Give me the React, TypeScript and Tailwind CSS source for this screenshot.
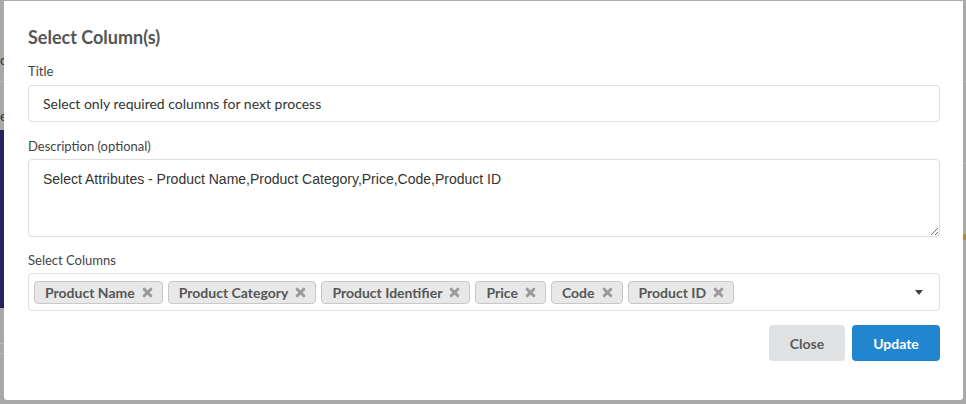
const tags = ['Product Name', 'Product Category', 'Product Identifier', 'Price', 'Code', 'Product ID'];

function Tag({ label }: { label: string }) {
  return (
    <div className="flex h-[23px] items-center rounded-[4px] border border-[#c8c8c8] bg-[#e8e8e8] pl-[10px] pr-[9px] text-[14px] font-bold text-[#575757]">
      <span>{label}</span>
      <svg width="11" height="11" viewBox="0 0 11 11" className="ml-[7px]">
        <path d="M2.2 2.2 L8.8 8.8 M8.8 2.2 L2.2 8.8" stroke="#9a9a9a" strokeWidth="3" strokeLinecap="round" />
      </svg>
    </div>
  );
}

export default function App() {
  return (
    <div
      className="flex h-[404px] w-[966px] overflow-hidden bg-[#a9a9a9]"
      style={{ fontFamily: 'Lato, "Noto Sans", sans-serif' }}
    >
      {/* page behind the overlay, left edge */}
      <div className="flex w-[4px] flex-col">
        <div className="h-[82px] border-b border-[#b8b8b8] pt-[52px] text-[14px] leading-[16px] text-[#333]">c</div>
        <div className="h-[48px] pt-[26px] text-[14px] leading-[16px] text-[#333]">e</div>
        <div className="h-[178px] bg-[#26245e]" />
        <div className="h-[36px] border-b border-[#b8b8b8]" />
        <div className="h-[10px] border-b border-[#b8b8b8]" />
      </div>

      <div className="mt-[1px] flex h-[399px] flex-1 flex-col rounded-b-[3px] bg-white pl-6 pr-[23px] pt-[25px]">
        <h2 className="h-[22px] text-[18px] font-bold leading-[22px] text-[#555]">Select Column(s)</h2>

        <label className="mt-[15px] block h-[17px] text-[13px] leading-[17px] text-[#444]">Title</label>
        <input
          className="mt-[5px] h-[37px] w-full rounded-[4px] border border-[#dedede] px-[14px] text-[14px] text-[#333] outline-none"
          defaultValue="Select only required columns for next process"
        />

        <label className="mt-[16px] block h-[17px] text-[13px] leading-[17px] text-[#444]">Description (optional)</label>
        <textarea
          className="mt-[4px] h-[78px] w-full resize-y rounded-[4px] border border-[#dedede] px-[14px] pt-[10px] text-[14px] leading-[18px] text-[#333] outline-none"
          style={{ fontFamily: '"Liberation Sans", Arial, sans-serif' }}
          defaultValue="Select Attributes - Product Name,Product Category,Price,Code,Product ID"
        />

        <label className="mt-[15px] block h-[17px] text-[13px] leading-[17px] text-[#444]">Select Columns</label>
        <div className="mt-[4px] flex h-[38px] items-center rounded-[4px] border border-[#dedede] pl-[5px] pr-[16px]">
          <div className="flex flex-1 gap-[5px]">
            {tags.map((t) => (
              <Tag key={t} label={t} />
            ))}
          </div>
          <svg width="8" height="5" viewBox="0 0 8 5">
            <path d="M0 0 L8 0 L4 5 Z" fill="#444" />
          </svg>
        </div>

        <div className="mt-[14px] flex justify-end gap-[7px]">
          <button className="h-[36px] w-[76px] rounded-[4px] bg-[#e0e1e2] text-[14px] font-bold text-[#5a5a5a]">Close</button>
          <button className="h-[36px] w-[88px] rounded-[4px] bg-[#2185d0] text-[14px] font-bold text-white">Update</button>
        </div>
      </div>

      {/* page behind the overlay, right edge */}
      <div className="flex w-[3px] flex-col">
        <div className="h-[82px] border-b border-[#b8b8b8]" />
        <div className="h-[82px] border-b border-[#b8b8b8]" />
        <div className="h-[70px]" />
        <div className="h-[6px] bg-[#b08a3a]" />
      </div>
    </div>
  );
}
